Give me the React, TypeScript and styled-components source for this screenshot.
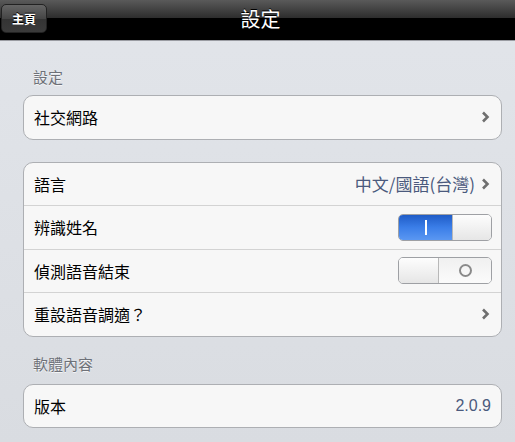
import { createGlobalStyle } from 'styled-components';
import styled from 'styled-components';

const GlobalStyle = createGlobalStyle`
  html, body {
    margin: 0;
    padding: 0;
    background: #dfe2e7;
  }
  body {
    font-family: 'Noto Sans CJK TC', 'Liberation Sans', sans-serif;
  }
`;

const Chevron = () => (
  <svg width='9' height='12' viewBox='0 0 9 12'>
    <polyline
      points='2,1.5 6.5,6 2,10.5'
      fill='none'
      stroke='#6f6f6f'
      strokeWidth='2.6'
    />
  </svg>
);

type SwitchProps = { on: boolean };

const Switch = ({ on }: SwitchProps) => (
  <SwitchTrack>
    {on ? (
      <>
        <SwitchOnPart>
          <OnMark />
        </SwitchOnPart>
        <SwitchKnob />
      </>
    ) : (
      <>
        <SwitchKnob />
        <SwitchOffPart>
          <OffMark />
        </SwitchOffPart>
      </>
    )}
  </SwitchTrack>
);

const App = () => {
  return (
    <>
      <GlobalStyle />
      <Page>
        <NavBar>
          <BackButton>主頁</BackButton>
          <NavTitle>設定</NavTitle>
        </NavBar>
        <Content>
          <SectionHeader first>設定</SectionHeader>
          <Group>
            <Row>
              <Label>社交網路</Label>
              <Accessory>
                <Chevron />
              </Accessory>
            </Row>
          </Group>

          <Group spaced>
            <Row>
              <Label>語言</Label>
              <Accessory>
                <Value>中文/國語(台灣)</Value>
                <Chevron />
              </Accessory>
            </Row>
            <Row>
              <Label>辨識姓名</Label>
              <Switch on />
            </Row>
            <Row>
              <Label>偵測語音結束</Label>
              <Switch on={false} />
            </Row>
            <Row>
              <Label>重設語音調適？</Label>
              <Accessory>
                <Chevron />
              </Accessory>
            </Row>
          </Group>

          <SectionHeader>軟體內容</SectionHeader>
          <Group>
            <Row>
              <Label>版本</Label>
              <Value plain>2.0.9</Value>
            </Row>
          </Group>
        </Content>
      </Page>
    </>
  );
};

export default App;

const Page = styled.div`
  width: 515px;
  height: 442px;
  overflow: hidden;
  background: linear-gradient(to bottom, #e2e5ea 0%, #d9dce1 100%);
`;

const NavBar = styled.div`
  position: relative;
  height: 40px;
  display: flex;
  align-items: center;
  justify-content: center;
  background: linear-gradient(
    to bottom,
    #5a5a5a 0%,
    #2e2e2e 44%,
    #000000 46%,
    #000000 100%
  );
  border-bottom: 1px solid #9a9ca2;
`;

const BackButton = styled.div`
  position: absolute;
  left: 1px;
  top: 4px;
  width: 46px;
  height: 29px;
  box-sizing: border-box;
  border-radius: 5px;
  border: 1px solid #222222;
  background: linear-gradient(to bottom, #656565 0%, #464646 50%, #343434 52%, #3a3a3a 100%);
  color: #ffffff;
  font-size: 12px;
  font-weight: bold;
  display: flex;
  align-items: center;
  justify-content: center;
  text-shadow: 0 -1px 0 #000;
`;

const NavTitle = styled.div`
  color: #ffffff;
  font-size: 20px;
  margin-left: 6px;
  margin-top: -4px;
  text-shadow: 0 -1px 0 #000;
`;

const Content = styled.div`
  padding: 0 13px 0 23px;
`;

const SectionHeader = styled.div<{ first?: boolean }>`
  height: ${(p) => (p.first ? '54px' : '47px')};
  box-sizing: border-box;
  padding: ${(p) => (p.first ? '27px' : '18px')} 10px 0;
  line-height: 18px;
  font-size: 15px;
  color: #6e7178;
  text-shadow: 0 1px 0 #f4f5f7;
`;

const Group = styled.div<{ spaced?: boolean }>`
  margin-top: ${(p) => (p.spaced ? '22px' : '0')};
  background: #f7f7f7;
  border: 1px solid #adafb3;
  border-radius: 10px;
  overflow: hidden;
`;

const Row = styled.div`
  height: 42.5px;
  display: flex;
  align-items: center;
  justify-content: space-between;
  padding: 0 9px 0 10px;

  & + & {
    border-top: 1px solid #d3d3d3;
  }
`;

const Label = styled.div`
  font-size: 16px;
  color: #000000;
`;

const Accessory = styled.div`
  display: flex;
  align-items: center;
  gap: 6px;
  margin-right: 2px;
`;

const Value = styled.div<{ plain?: boolean }>`
  font-size: ${(p) => (p.plain ? '16px' : '17px')};
  color: #4b5a7d;
  margin-right: ${(p) => (p.plain ? '1px' : '0')};
  font-family: ${(p) =>
    p.plain
      ? "'Liberation Sans', sans-serif"
      : "'Noto Sans CJK TC', 'Liberation Sans', sans-serif"};
`;

const SwitchTrack = styled.div`
  width: 94px;
  height: 27px;
  box-sizing: border-box;
  border: 1px solid #9ea0a4;
  border-radius: 5px;
  overflow: hidden;
  display: flex;
  background: #f5f5f5;
`;

const SwitchOnPart = styled.div`
  width: 55px;
  height: 100%;
  background: linear-gradient(to bottom, #1f5cc7 0%, #3b7ee8 50%, #5a97f2 100%);
  display: flex;
  align-items: center;
  justify-content: center;
`;

const OnMark = styled.div`
  width: 2px;
  height: 15px;
  background: #ffffff;
`;

const SwitchKnob = styled.div`
  width: 40px;
  height: 100%;
  box-sizing: border-box;
  border-left: 1px solid #b8b8b8;
  border-right: 1px solid #b8b8b8;
  background: linear-gradient(to bottom, #fdfdfd 0%, #e6e6e6 100%);
  &:first-child {
    border-left: none;
  }
  &:last-child {
    border-right: none;
  }
`;

const SwitchOffPart = styled.div`
  flex: 1;
  height: 100%;
  background: linear-gradient(to bottom, #f0f0f0 0%, #fbfbfb 100%);
  display: flex;
  align-items: center;
  justify-content: center;
`;

const OffMark = styled.div`
  width: 9px;
  height: 9px;
  border: 2px solid #8a8a8a;
  border-radius: 50%;
`;
